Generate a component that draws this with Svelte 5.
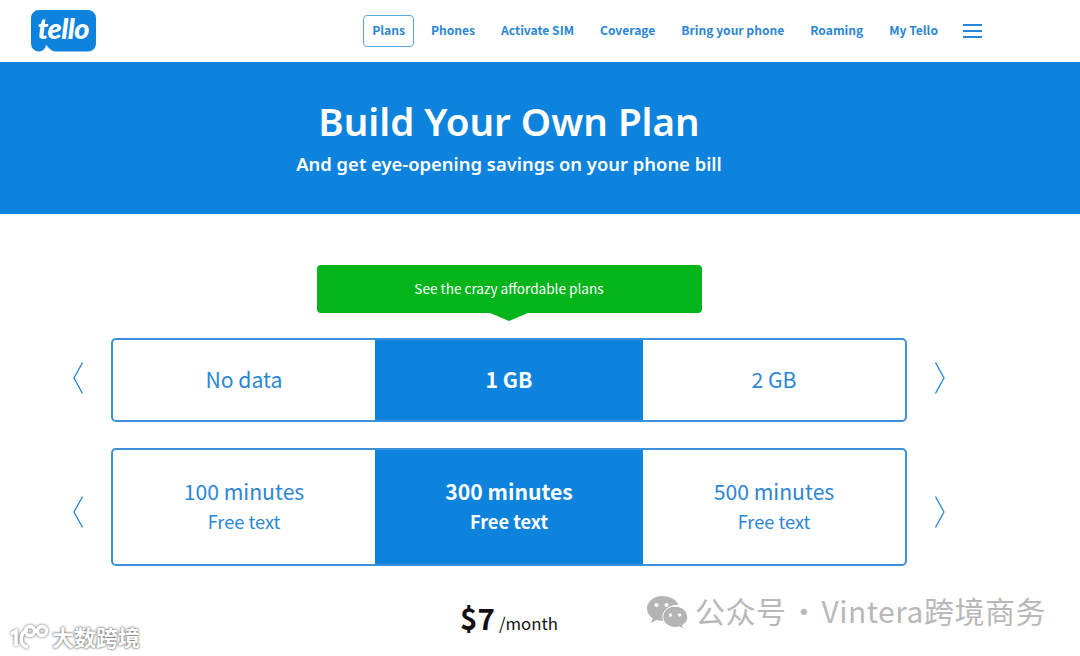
<script lang="ts">
  const nav = ["Plans", "Phones", "Activate SIM", "Coverage", "Bring your phone", "Roaming", "My Tello"];
  const dataOptions = [
    { label: "No data" },
    { label: "1 GB", active: true },
    { label: "2 GB" },
  ];
  const minuteOptions = [
    { label: "100 minutes", sub: "Free text" },
    { label: "300 minutes", sub: "Free text", active: true },
    { label: "500 minutes", sub: "Free text" },
  ];
  const rows = [
    { options: dataOptions, tall: false },
    { options: minuteOptions, tall: true },
  ];
</script>

<div class="page">
  <header class="topbar">
    <a class="logo" href="#top" aria-label="Tello">
      <svg width="65" height="42" viewBox="0 0 65 42">
        <path d="M8 0H57a8 8 0 0 1 8 8V33.500a8 8 0 0 1-8 8H25C20 41.500 18.500 38.500 15 35C14.500 38.500 12 41.500 8 41.500a8 8 0 0 1-8-8V8a8 8 0 0 1 8-8Z" fill="#0d83dd" />
        <text x="6.500" y="28.500" class="logo-text">tello</text>
      </svg>
    </a>
    <nav class="nav">
      {#each nav as item, i}
        <a class="nav-link" class:current={i === 0} href="#top">{item}</a>
      {/each}
      <button class="burger" aria-label="Menu"><span></span><span></span><span></span></button>
    </nav>
  </header>

  <section class="hero">
    <h1>Build Your Own Plan</h1>
    <p>And get eye-opening savings on your phone bill</p>
  </section>

  <main class="builder">
    <div class="callout">See the crazy affordable plans</div>

    {#each rows as row}
      <div class="picker" class:tall={row.tall}>
        <button class="chevron" aria-label="Previous">
          <svg width="10" height="32" viewBox="0 0 10 32"><path d="M9.500 .5 1 16l8.500 15.500" /></svg>
        </button>
        <div class="options">
          {#each row.options as opt}
            <div class="option" class:active={opt.active}>
              <span class="opt-label">{opt.label}</span>
              {#if opt.sub}<span class="opt-sub">{opt.sub}</span>{/if}
            </div>
          {/each}
        </div>
        <button class="chevron" aria-label="Next">
          <svg width="10" height="32" viewBox="0 0 10 32"><path d="M.5 .5 9 16 .5 31.500" /></svg>
        </button>
      </div>
    {/each}

    <div class="price"><strong>$7</strong><span>/month</span></div>
  </main>

  <div class="mark-left">
    <svg width="40" height="26" viewBox="0 0 40 26">
      <g fill="none" stroke="#fff" stroke-width="3.500">
        <path d="M2 11 7 8v15" />
        <path d="M19 7C10 9 10 23 19 24" />
        <circle cx="21" cy="8" r="4.500" />
        <circle cx="33" cy="8" r="4.500" />
      </g>
    </svg>
    <span>大数跨境</span>
  </div>

  <div class="mark-right">
    <svg width="42" height="34" viewBox="0 0 42 34">
      <path d="M16 1C7.700 1 1 6.600 1 13.500c0 4 2.200 7.400 5.600 9.700L5 28l5.600-3c1.700.5 3.500.8 5.400.8.600 0 1.200 0 1.700-.1-.4-1.200-.6-2.400-.6-3.700 0-6.800 6.400-12.300 14.300-12.300h1C30.500 4.700 23.900 1 16 1Z" fill="#b4b4b4" />
      <path d="M41.500 21.800c0-5.900-5.700-10.600-12.300-10.600s-12.400 4.700-12.400 10.600 5.800 10.600 12.400 10.600c1.400 0 2.800-.2 4-.6l4.500 2.200-1.200-3.900c3.300-2 5.500-4.900 5.500-8.300Z" fill="#b4b4b4" stroke="#fff" stroke-width="1" />
      <circle cx="10.500" cy="10" r="2" fill="#fff" />
      <circle cx="20.500" cy="10" r="2" fill="#fff" />
      <circle cx="24.500" cy="20" r="1.700" fill="#fff" />
      <circle cx="33.500" cy="20" r="1.700" fill="#fff" />
    </svg>
    <span>公众号 · Vintera跨境商务</span>
  </div>
</div>

<style>
  :global(body) {
    margin: 0;
    background: #fff;
    overflow: hidden;
  }
  .page {
    position: relative;
    height: 656px;
    overflow: hidden;
    font-family: "Noto Sans CJK SC", "Noto Sans", sans-serif;
    color: #2a86d6;
  }

  .topbar {
    height: 62px;
    display: flex;
    align-items: center;
    justify-content: space-between;
    padding: 0 98px 0 31px;
    box-sizing: border-box;
  }
  .logo { display: block; height: 42px; }
  .logo-text {
    font-family: "Lato", sans-serif;
    font-style: italic;
    font-weight: 900;
    font-size: 29px;
    letter-spacing: -0.5px;
    fill: #fff;
  }
  .nav { display: flex; align-items: center; gap: 8px; }
  .nav-link {
    display: block;
    height: 32px;
    line-height: 27px;
    padding: 0 8px;
    border: 1px solid transparent;
    border-radius: 4px;
    box-sizing: border-box;
    font-size: 12.100px;
    font-weight: 700;
    color: #2a86d6;
    text-decoration: none;
    white-space: nowrap;
  }
  .nav-link.current { border-color: #5da6dd; }
  .burger {
    display: flex;
    flex-direction: column;
    gap: 4px;
    width: 19px;
    margin-left: 8px;
    padding: 0;
    border: 0;
    background: none;
  }
  .burger span { display: block; height: 2px; background: #2a86d6; }

  .hero {
    height: 152px;
    background: #0d83dd;
    color: #fff;
    text-align: center;
    padding: 35px 62px 0 0;
    box-sizing: border-box;
    font-family: "Noto Sans", sans-serif;
  }
  .hero h1 {
    margin: 0;
    font-size: 38.600px;
    line-height: 48px;
    font-weight: 600;
  }
  .hero p {
    margin: 6px 0 0;
    font-size: 18.400px;
    line-height: 26px;
    font-weight: 600;
  }

  .builder {
    display: flex;
    flex-direction: column;
    align-items: center;
    width: 1018px;
    padding-top: 51px;
  }
  .callout {
    position: relative;
    width: 385px;
    height: 48px;
    margin-bottom: 25px;
    background: #03b51b;
    border-radius: 4px;
    color: #fff;
    font-size: 13.600px;
    line-height: 46px;
    text-align: center;
  }
  .callout::after {
    content: "";
    position: absolute;
    left: 50%;
    bottom: -8px;
    margin-left: -19px;
    border-style: solid;
    border-width: 8px 19px 0;
    border-color: #03b51b transparent transparent;
  }

  .picker {
    display: flex;
    align-items: center;
    gap: 28px;
    margin-bottom: 26px;
  }
  .chevron {
    padding: 0;
    border: 0;
    background: none;
    line-height: 0;
    margin-top: -4px;
  }
  .picker.tall .chevron { margin-top: 9px; }
  .chevron svg { fill: none; stroke: #2a86d6; stroke-width: 1.300; }
  .options {
    width: 796px;
    height: 84px;
    box-sizing: border-box;
    display: grid;
    grid-template-columns: 262px 268px 1fr;
    border: 2px solid #3b90d9;
    border-radius: 5px;
    overflow: hidden;
  }
  .picker.tall .options { height: 118px; }
  .option {
    display: flex;
    flex-direction: column;
    align-items: center;
    justify-content: center;
    padding-bottom: 2px;
    font-size: 21.200px;
    line-height: 30px;
  }
  .option.active {
    background: #0d83dd;
    color: #fff;
    font-weight: 700;
  }
  .opt-sub { font-size: 18.200px; }

  .price {
    margin-top: 5px;
    color: #111;
    display: flex;
    align-items: baseline;
    gap: 4px;
    line-height: 40px;
  }
  .price strong { font-size: 29.500px; font-weight: 700; }
  .price span { font-size: 16.800px; }

  .mark-left {
    position: absolute;
    left: 9px;
    top: 622px;
    display: flex;
    align-items: center;
    gap: 3px;
    color: #fff;
    font-size: 22px;
    line-height: 28px;
    font-weight: 700;
    text-shadow: 0 0 2px #666, 0 0 3px #888;
  }
  .mark-left svg { filter: drop-shadow(0 0 1.500px #666); }
  .mark-right {
    position: absolute;
    left: 646px;
    top: 595px;
    display: flex;
    align-items: center;
    gap: 7px;
    color: #b8b8b8;
    font-size: 30px;
    letter-spacing: 0.5px;
    word-spacing: -5px;
    line-height: 34px;
    white-space: nowrap;
  }
  .mark-right span { margin-top: -4px; }
</style>
